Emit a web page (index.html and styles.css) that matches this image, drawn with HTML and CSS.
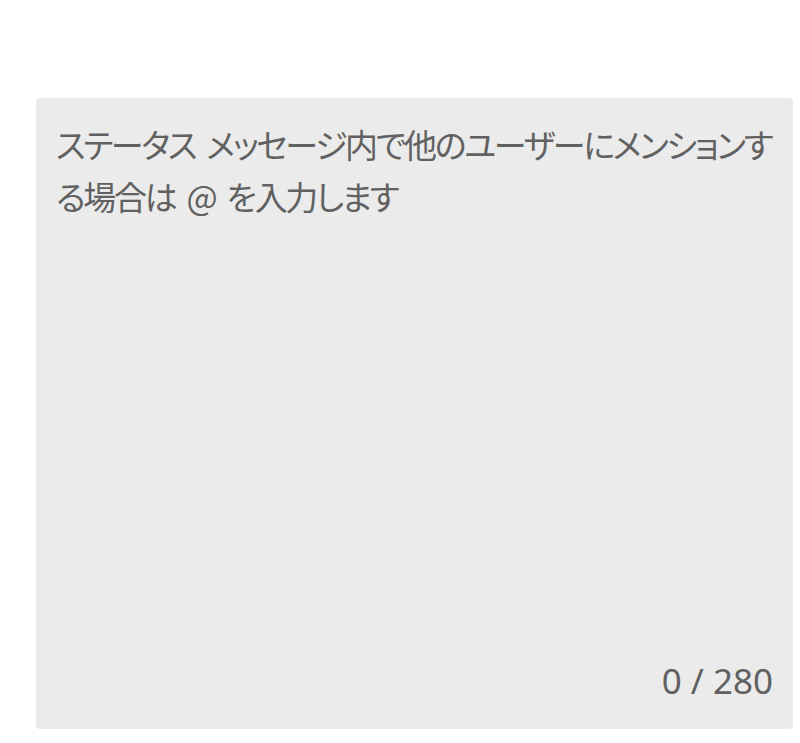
FILE: index.html
```html
<!DOCTYPE html>
<html lang="ja">
<head>
<meta charset="utf-8">
<link rel="stylesheet" href="styles.css">
</head>
<body>
<div class="page">
  <div class="status-box">
    <div class="placeholder">ステータス メッセージ内で他のユーザーにメンションする場合は @ を入力します</div>
    <div class="counter">0 / 280</div>
  </div>
</div>
</body>
</html>
```
FILE: styles.css
```css
html, body {
  margin: 0;
  padding: 0;
  background: #ffffff;
}
.page {
  padding: 98px 7px 14px 36px;
}
.status-box {
  box-sizing: border-box;
  height: 631px;
  background: #ebebeb;
  border-radius: 4px;
  padding: 20px 20px 26px 20px;
  display: flex;
  flex-direction: column;
}
.placeholder {
  flex: 1;
  font-family: "Noto Sans CJK JP", "Noto Sans", sans-serif;
  font-size: 33px;
  font-feature-settings: "palt";
  letter-spacing: -2.3px;
  word-spacing: 6px;
  line-height: 52px;
  color: #616161;
}
.counter {
  align-self: flex-end;
  font-family: "Noto Sans", "Open Sans", sans-serif;
  font-size: 35px;
  line-height: 44px;
  color: #616161;
}
```
